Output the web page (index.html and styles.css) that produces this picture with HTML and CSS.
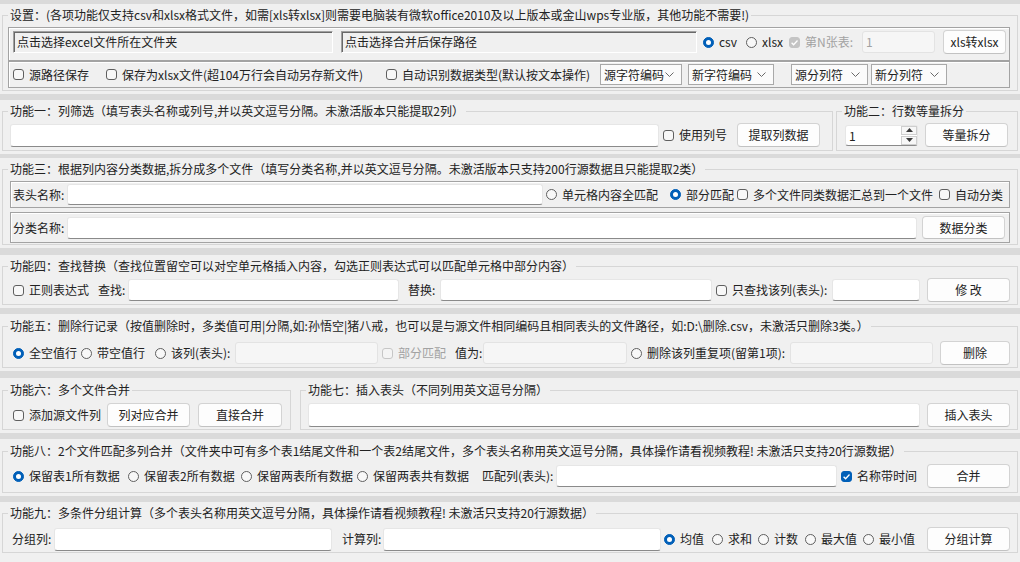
FILE: index.html
```html
<!DOCTYPE html>
<html lang="zh-CN">
<head>
<meta charset="utf-8">
<title>表格批量处理工具</title>
<link rel="stylesheet" href="styles.css">
</head>
<body>

<div class="sec s1">
  <fieldset class="grp">
    <legend>设置：(各项功能仅支持csv和xlsx格式文件，如需[xls转xlsx]则需要电脑装有微软office2010及以上版本或金山wps专业版，其他功能不需要!)</legend>
    <div class="panel setting-files">
      <div class="path src-path">点击选择excel文件所在文件夹</div>
      <div class="path out-path">点击选择合并后保存路径</div>
      <label class="opt fmt-csv"><span class="rb on"></span>csv</label>
      <label class="opt fmt-xlsx"><span class="rb"></span>xlsx</label>
      <label class="opt dis sheet-n"><span class="cb on off"><svg viewBox="0 0 11 11"><path d="M2.6 5.7 L4.6 7.7 L8.5 3.5"/></svg></span>第N张表:</label>
      <div class="tb dis sheet-input">1</div>
      <button class="btn xls-btn">xls转xlsx</button>
    </div>
    <div class="panel setting-opts">
      <label class="opt keep-path"><span class="cb"></span>源路径保存</label>
      <label class="opt save-xlsx"><span class="cb"></span>保存为xlsx文件(超104万行会自动另存新文件)</label>
      <label class="opt auto-type"><span class="cb"></span>自动识别数据类型(默认按文本操作)</label>
      <div class="sel enc-src">源字符编码<svg class="chev" viewBox="0 0 9 5"><path d="M0.5 0.5 L4.5 4.5 L8.5 0.5"/></svg></div>
      <div class="sel enc-new">新字符编码<svg class="chev" viewBox="0 0 9 5"><path d="M0.5 0.5 L4.5 4.5 L8.5 0.5"/></svg></div>
      <div class="sel sep-src">源分列符<svg class="chev" viewBox="0 0 9 5"><path d="M0.5 0.5 L4.5 4.5 L8.5 0.5"/></svg></div>
      <div class="sel sep-new">新分列符<svg class="chev" viewBox="0 0 9 5"><path d="M0.5 0.5 L4.5 4.5 L8.5 0.5"/></svg></div>
    </div>
  </fieldset>
</div>

<div class="sec s2">
  <fieldset class="grp grp-filter">
    <legend>功能一：列筛选（填写表头名称或列号,并以英文逗号分隔。未激活版本只能提取2列）</legend>
    <div class="row">
      <div class="tb col-input"></div>
      <label class="opt use-colno"><span class="cb"></span>使用列号</label>
      <button class="btn btn-extract">提取列数据</button>
    </div>
  </fieldset>
  <fieldset class="grp grp-split">
    <legend>功能二：行数等量拆分</legend>
    <div class="row">
      <div class="tb spinner">1
        <span class="spin">
          <span class="spin-btn"><svg viewBox="0 0 7 4"><path d="M0 4 L3.5 0 L7 4 Z"/></svg></span>
          <span class="spin-btn"><svg viewBox="0 0 7 4"><path d="M0 0 L3.5 4 L7 0 Z"/></svg></span>
        </span>
      </div>
      <button class="btn btn-split">等量拆分</button>
    </div>
  </fieldset>
</div>

<div class="sec s3">
  <fieldset class="grp">
    <legend>功能三：根据列内容分类数据,拆分成多个文件（填写分类名称,并以英文逗号分隔。未激活版本只支持200行源数据且只能提取2类）</legend>
    <div class="panel cls-head">
      <span class="lbl lbl-name">表头名称:</span>
      <div class="tb head-input"></div>
      <label class="opt opt-full"><span class="rb"></span>单元格内容全匹配</label>
      <label class="opt opt-part"><span class="rb on"></span>部分匹配</label>
      <label class="opt opt-merge"><span class="cb"></span>多个文件同类数据汇总到一个文件</label>
      <label class="opt opt-auto"><span class="cb"></span>自动分类</label>
    </div>
    <div class="panel cls-name">
      <span class="lbl lbl-name">分类名称:</span>
      <div class="tb cls-input"></div>
      <button class="btn btn-cls">数据分类</button>
    </div>
  </fieldset>
</div>

<div class="sec s4">
  <fieldset class="grp">
    <legend>功能四：查找替换（查找位置留空可以对空单元格插入内容，勾选正则表达式可以匹配单元格中部分内容）</legend>
    <div class="row">
      <label class="opt opt-regex"><span class="cb"></span>正则表达式</label>
      <span class="lbl lbl-find">查找:</span>
      <div class="tb find-input"></div>
      <span class="lbl lbl-repl">替换:</span>
      <div class="tb repl-input"></div>
      <label class="opt opt-only"><span class="cb"></span>只查找该列(表头):</label>
      <div class="tb only-input"></div>
      <button class="btn btn-edit">修 改</button>
    </div>
  </fieldset>
</div>

<div class="sec s5">
  <fieldset class="grp">
    <legend>功能五：删除行记录（按值删除时，多类值可用|分隔,如:孙悟空|猪八戒，也可以是与源文件相同编码且相同表头的文件路径，如:D:\删除.csv，未激活只删除3类。）</legend>
    <div class="row">
      <label class="opt r-allempty"><span class="rb on"></span>全空值行</label>
      <label class="opt r-hasempty"><span class="rb"></span>带空值行</label>
      <label class="opt r-col"><span class="rb"></span>该列(表头):</label>
      <div class="tb dis col-dis"></div>
      <label class="opt dis cb-part"><span class="cb off"></span>部分匹配</label>
      <span class="lbl lbl-val">值为:</span>
      <div class="tb dis val-dis"></div>
      <label class="opt r-dup"><span class="rb"></span>删除该列重复项(留第1项):</label>
      <div class="tb dis dup-dis"></div>
      <button class="btn btn-del">删除</button>
    </div>
  </fieldset>
</div>

<div class="sec s6">
  <fieldset class="grp grp-merge">
    <legend>功能六：多个文件合并</legend>
    <div class="row">
      <label class="opt opt-addsrc"><span class="cb"></span>添加源文件列</label>
      <button class="btn btn-colmerge">列对应合并</button>
      <button class="btn btn-direct">直接合并</button>
    </div>
  </fieldset>
  <fieldset class="grp grp-header">
    <legend>功能七：插入表头（不同列用英文逗号分隔）</legend>
    <div class="row">
      <div class="tb header-input"></div>
      <button class="btn btn-header">插入表头</button>
    </div>
  </fieldset>
</div>

<div class="sec s8">
  <fieldset class="grp">
    <legend>功能八：2个文件匹配多列合并（文件夹中可有多个表1结尾文件和一个表2结尾文件，多个表头名称用英文逗号分隔，具体操作请看视频教程! 未激活只支持20行源数据）</legend>
    <div class="row">
      <label class="opt r-keep1"><span class="rb on"></span>保留表1所有数据</label>
      <label class="opt r-keep2"><span class="rb"></span>保留表2所有数据</label>
      <label class="opt r-keepall"><span class="rb"></span>保留两表所有数据</label>
      <label class="opt r-common"><span class="rb"></span>保留两表共有数据</label>
      <span class="lbl lbl-match">匹配列(表头):</span>
      <div class="tb match-input"></div>
      <label class="opt opt-time"><span class="cb on"><svg viewBox="0 0 11 11"><path d="M2.6 5.7 L4.6 7.7 L8.5 3.5"/></svg></span>名称带时间</label>
      <button class="btn btn-merge">合并</button>
    </div>
  </fieldset>
</div>

<div class="sec s9">
  <fieldset class="grp">
    <legend>功能九：多条件分组计算（多个表头名称用英文逗号分隔，具体操作请看视频教程! 未激活只支持20行源数据）</legend>
    <div class="row">
      <span class="lbl lbl-group">分组列:</span>
      <div class="tb group-input"></div>
      <span class="lbl lbl-calc">计算列:</span>
      <div class="tb calc-input"></div>
      <label class="opt r-avg"><span class="rb on"></span>均值</label>
      <label class="opt r-sum"><span class="rb"></span>求和</label>
      <label class="opt r-count"><span class="rb"></span>计数</label>
      <label class="opt r-max"><span class="rb"></span>最大值</label>
      <label class="opt r-min"><span class="rb"></span>最小值</label>
      <button class="btn btn-group">分组计算</button>
    </div>
  </fieldset>
</div>

</body>
</html>
```

FILE: styles.css
```css
* { box-sizing: border-box; }
html, body { margin: 0; }
body {
  width: 1020px;
  height: 562px;
  overflow: hidden;
  background: #dadada;
  padding-top: 4px;
  font-family: "Noto Sans CJK SC", "Microsoft YaHei", sans-serif;
  font-size: 12px;
  line-height: 16px;
  color: #222222;
}

/* ---------- sections ---------- */
.sec { display: flex; background: #f0f0f0; padding: 3px 2px 3px; }
.s1 { height: 90px; }
.s2 { margin-top: 6px; height: 54px; }
.s3 { margin-top: 4px; height: 90px; }
.s4 { margin-top: 7px; height: 53px; }
.s5 { margin-top: 6px; height: 57px; padding-top: 4px; }
.s6 { margin-top: 7px; height: 55px; padding-top: 4px; }
.s8 { margin-top: 6px; height: 57px; padding-top: 4px; }
.s9 { margin-top: 6px; height: 60px; padding-bottom: 9px; }

.grp {
  margin: 0;
  padding: 0 6px 0 5px;
  border: 1px solid #d6d6d6;
  min-width: 0;
  flex: 1;
}
.grp legend { padding: 0 2px; margin: 0; white-space: nowrap; }
.grp-filter { flex: 0 0 831px; }
.grp-split { margin-left: 3px; }
.grp-merge { flex: 0 0 289px; }
.grp-header { margin-left: 9px; }

.row { display: flex; align-items: center; height: 24px; margin-top: 4px; }
.s5 .row { margin-top: 7px; }
.s6 .row, .s8 .row { margin-top: 5px; }
.s9 .row { margin-top: 6px; }

/* ---------- panels ---------- */
.panel {
  display: flex;
  align-items: center;
  border: 1px solid #a3a3a3;
  box-shadow: inset 1px 1px 0 #ffffff;
}
.setting-files { margin-top: 4px; width: 1002px; height: 34px; padding: 0 0 4px 4px; }
.setting-opts { width: 1002px; height: 27px; padding-left: 4px; }
.cls-head { margin: 4px 0 0 2px; width: 1000px; height: 27px; padding-left: 2px; }
.cls-name { margin: 4px 0 0 2px; width: 1000px; height: 31px; padding-left: 2px; }

/* ---------- controls ---------- */
.opt {
  display: inline-flex;
  align-items: center;
  gap: 5px;
  white-space: nowrap;
  flex-shrink: 0;
}
.opt.dis { color: #a2a2a2; }
.lbl { white-space: nowrap; flex-shrink: 0; }

.rb, .cb {
  width: 11px;
  height: 11px;
  flex-shrink: 0;
  border: 1px solid #5f5f5f;
  background: #f8f8f8;
  display: inline-flex;
  align-items: center;
  justify-content: center;
}
.rb { border-radius: 50%; }
.cb { border-radius: 3px; }
.rb.on { background: #005fb8; border-color: #005fb8; }
.rb.on::after {
  content: "";
  width: 5px;
  height: 5px;
  border-radius: 50%;
  background: #ffffff;
}
.cb.on { background: #005fb8; border-color: #005fb8; }
.cb.off { border-color: #c6c6c6; background: #f4f4f4; }
.cb.on.off { background: #c4c4c4; border-color: #c4c4c4; }
.cb svg { width: 11px; height: 11px; flex-shrink: 0; }
.cb svg path { fill: none; stroke: #ffffff; stroke-width: 1.3; }

.tb {
  flex-shrink: 0;
  height: 22px;
  background: #ffffff;
  border: 1px solid #e6e6e6;
  border-bottom-color: #8a8a8a;
  border-radius: 3px;
}
.tb.dis {
  background: #f6f6f6;
  border-color: #e3e3e3;
  color: #a2a2a2;
  padding-left: 3px;
  line-height: 20px;
}

.path {
  flex-shrink: 0;
  height: 22px;
  background: #f0f0f0;
  border-top: 1px solid #a0a0a0;
  border-left: 1px solid #a0a0a0;
  border-right: 1px solid #ffffff;
  border-bottom: 1px solid #ffffff;
  box-shadow: inset 1px 1px 0 #696969;
  padding-left: 3px;
  line-height: 20px;
  white-space: nowrap;
}

.btn {
  flex-shrink: 0;
  height: 24px;
  padding: 0;
  background: #fdfdfd;
  border: 1px solid #d3d3d3;
  border-bottom-color: #c2c2c2;
  border-radius: 4px;
  font: inherit;
  color: #222222;
  white-space: nowrap;
}

.sel {
  flex-shrink: 0;
  height: 21px;
  display: flex;
  align-items: center;
  justify-content: space-between;
  padding: 0 7px 0 3px;
  background: #fbfbfb;
  border: 1px solid #a9a9a9;
  white-space: nowrap;
}
.chev { width: 9px; height: 5px; }
.chev path { fill: none; stroke: #6a6a6a; stroke-width: 1; }

/* ---------- setting row 1 ---------- */
.src-path { width: 320px; }
.out-path { margin-left: 8px; width: 356px; }
.fmt-csv { margin-left: 6px; width: 43px; }
.fmt-xlsx { width: 43px; }
.sheet-n { width: 73px; }
.sheet-input { width: 73px; }
.xls-btn { margin-left: 8px; width: 63px; }

/* ---------- setting row 2 ---------- */
.keep-path { width: 93px; }
.save-xlsx { width: 280px; }
.auto-type { width: 214px; }
.enc-src { width: 82px; }
.enc-new { margin-left: 6px; width: 86px; }
.sep-src { margin-left: 17px; width: 77px; }
.sep-new { margin-left: 3px; width: 76px; }

/* ---------- 功能一 / 二 ---------- */
.col-input { margin-left: 2px; width: 649px; height: 23px; }
.use-colno { margin-left: 4px; width: 74px; }
.btn-extract { width: 83px; }

.spinner {
  position: relative;
  margin-left: 3px;
  width: 73px;
  height: 21px;
  padding-left: 3px;
  line-height: 19px;
  color: #222222;
}
.spin {
  position: absolute;
  right: 0;
  top: 0;
  width: 16px;
  display: flex;
  flex-direction: column;
  gap: 1px;
}
.spin-btn {
  height: 9px;
  display: flex;
  align-items: center;
  justify-content: center;
  border: 1px solid #cfcfcf;
  background: #f7f7f7;
}
.spin-btn svg { width: 7px; height: 4px; }
.spin-btn path { fill: #3a3a3a; }
.btn-split { margin-left: 7px; width: 83px; }

/* ---------- 功能三 ---------- */
.lbl-name { width: 54px; }
.head-input { width: 476px; height: 21px; }
.opt-full { margin-left: 3px; width: 124px; }
.opt-part { width: 67px; }
.opt-merge { width: 202px; }
.opt-auto { width: 67px; }
.cls-input { width: 850px; }
.btn-cls { margin-left: 5px; width: 83px; height: 23px; }

/* ---------- 功能四 ---------- */
.opt-regex { margin-left: 5px; width: 85px; }
.lbl-find { width: 30px; }
.find-input { width: 271px; }
.lbl-repl { margin-left: 9px; width: 32px; }
.repl-input { width: 272px; }
.opt-only { margin-left: 4px; width: 116px; }
.only-input { width: 88px; }
.btn-edit { margin-left: 7px; width: 83px; }

/* ---------- 功能五 ---------- */
.r-allempty { margin-left: 5px; width: 68px; }
.r-hasempty { width: 74px; }
.r-col { width: 80px; }
.col-dis { width: 143px; }
.cb-part { margin-left: 4px; width: 73px; }
.lbl-val { width: 28px; }
.val-dis { width: 144px; }
.r-dup { margin-left: 4px; width: 159px; }
.dup-dis { width: 143px; }
.btn-del { margin-left: 7px; width: 70px; }

/* ---------- 功能六 / 七 ---------- */
.opt-addsrc { margin-left: 5px; width: 94px; }
.btn-colmerge { width: 83px; }
.btn-direct { margin-left: 8px; width: 84px; }
.header-input { margin-left: 2px; width: 612px; height: 24px; }
.btn-header { margin-left: 7px; width: 83px; }

/* ---------- 功能八 ---------- */
.r-keep1 { margin-left: 5px; width: 115px; }
.r-keep2 { width: 113px; }
.r-keepall { width: 116px; }
.r-common { width: 125px; }
.lbl-match { width: 74px; }
.match-input { width: 281px; }
.opt-time { margin-left: 4px; width: 86px; }
.btn-merge { width: 83px; }

/* ---------- 功能九 ---------- */
.lbl-group { margin-left: 4px; width: 42px; }
.group-input { width: 278px; height: 23px; }
.lbl-calc { margin-left: 10px; width: 41px; }
.calc-input { width: 278px; height: 23px; }
.r-avg { margin-left: 3px; width: 48px; }
.r-sum { width: 46px; }
.r-count { width: 47px; }
.r-max { width: 58px; }
.r-min { width: 64px; }
.btn-group { width: 83px; }
```
